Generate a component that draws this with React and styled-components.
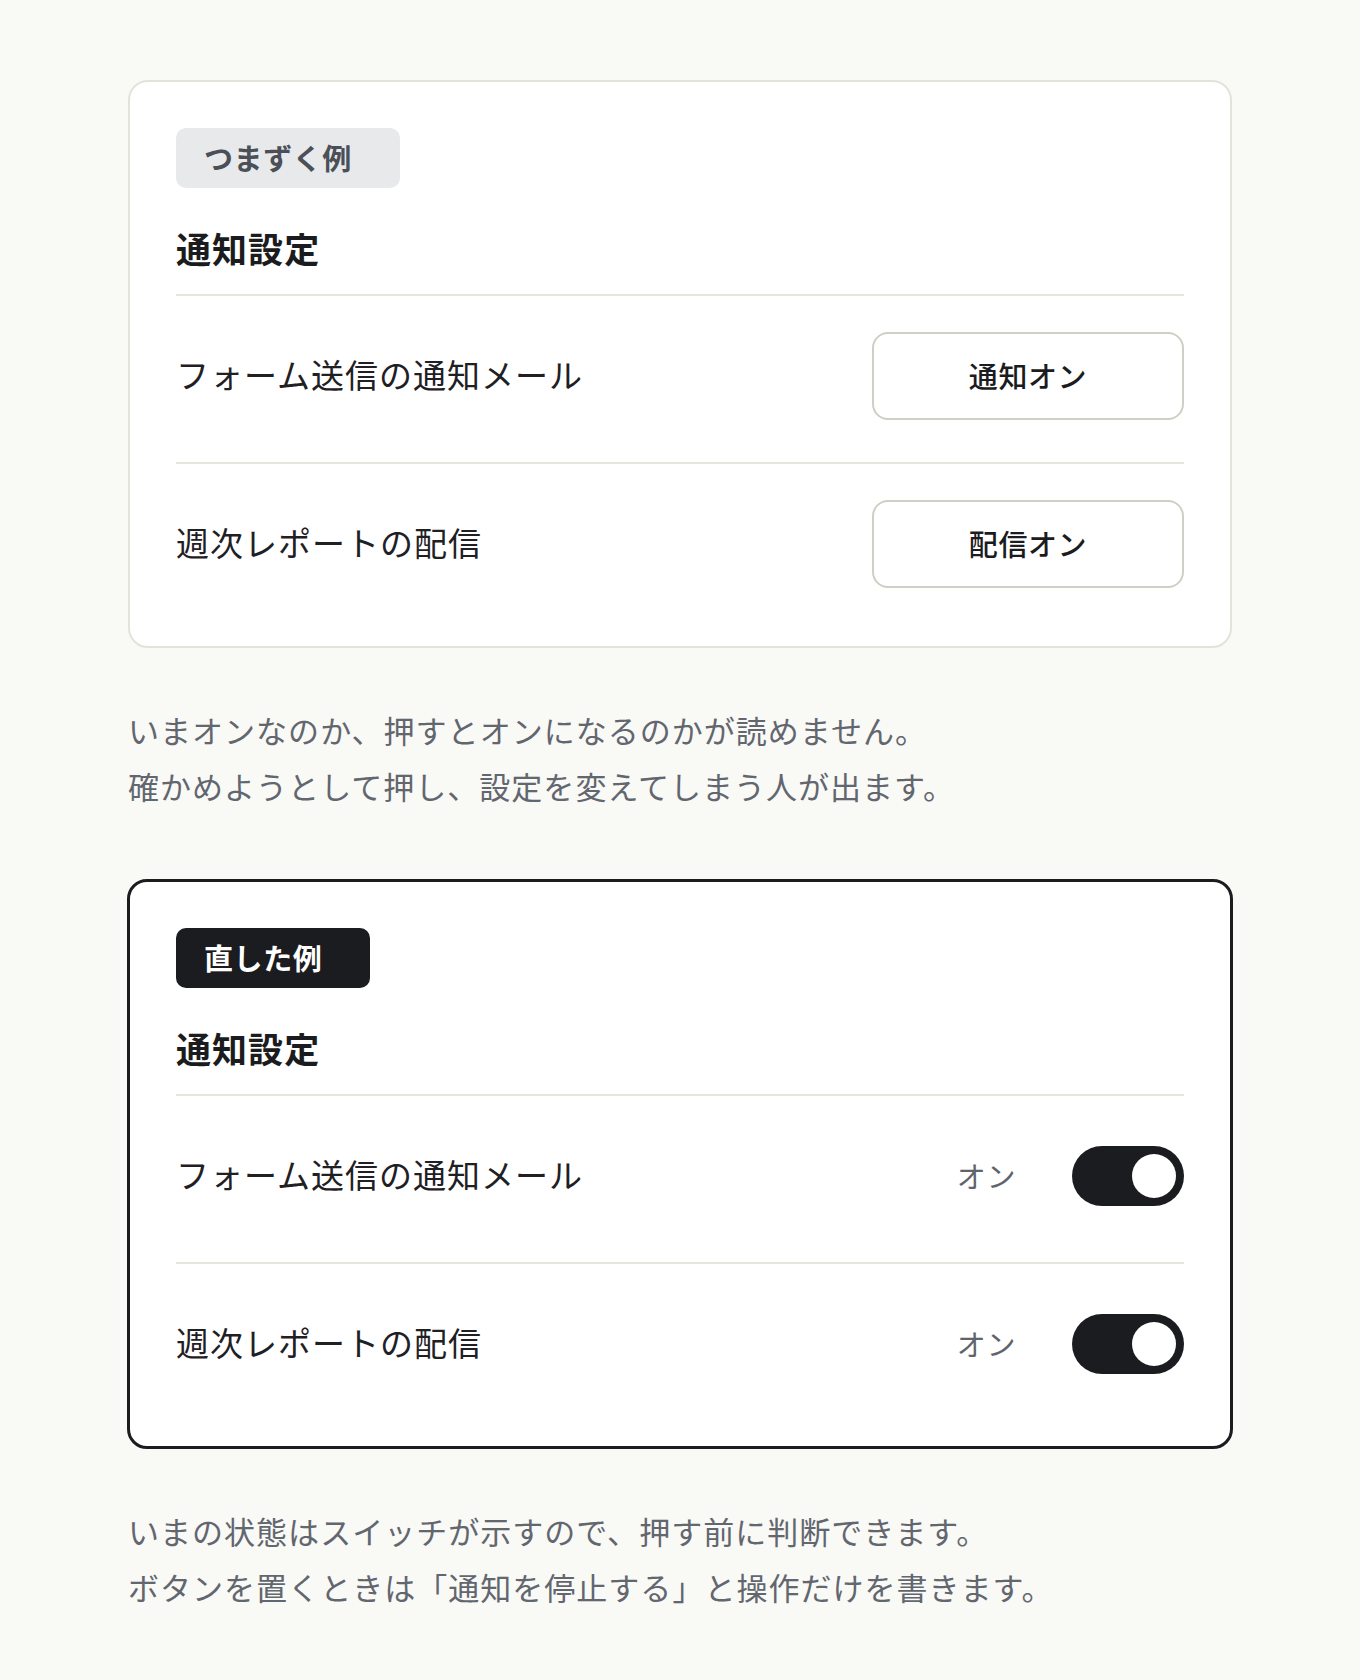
import React from 'react'
import styled, { createGlobalStyle } from "styled-components"

const ink = "#1b1c20";
const line = "#e6e6df";

const GlobalStyle = createGlobalStyle`
  body {
    margin: 0;
    background-color: #f9f9f5;
    font-family: "Noto Sans CJK JP", "Noto Sans", sans-serif;
    color: ${ink};
  }
`;

const settings = [
  { label: "フォーム送信の通知メール", button: "通知オン" },
  { label: "週次レポートの配信", button: "配信オン" },
];

function SettingsCard({ fixed }) {
  return (
    <Card $fixed={fixed}>
      <Badge $fixed={fixed}>{fixed ? "直した例" : "つまずく例"}</Badge>
      <Title>通知設定</Title>
      {settings.map((s) => (
        <Row key={s.label}>
          <Label>{s.label}</Label>
          {fixed ? (
            <SwitchGroup>
              <State>オン</State>
              <Switch role="switch" aria-checked="true">
                <Knob />
              </Switch>
            </SwitchGroup>
          ) : (
            <OutlineButton type="button">{s.button}</OutlineButton>
          )}
        </Row>
      ))}
    </Card>
  )
}

function App() {
  return (
    <>
      <GlobalStyle />
      <Page>
        <Section>
          <SettingsCard />
          <Note>
            いまオンなのか、押すとオンになるのかが読めません。<br />
            確かめようとして押し、設定を変えてしまう人が出ます。
          </Note>
          <Spacer />
          <SettingsCard fixed />
          <Note>
            いまの状態はスイッチが示すので、押す前に判断できます。<br />
            ボタンを置くときは「通知を停止する」と操作だけを書きます。
          </Note>
        </Section>
      </Page>
    </>
  )
}

const Page = styled.main`
  display: flex;
  justify-content: center;
  padding: 80px 0 64px;
`;

const Section = styled.section`
  width: 1104px;
  display: flex;
  flex-direction: column;
`;

const Spacer = styled.div`
  height: 66px;
`;

const Card = styled.div`
  align-self: center;
  width: 1008px;
  padding: 46px;
  background-color: #ffffff;
  border: ${({ $fixed }) => ($fixed ? `3px solid ${ink}` : "2px solid #e3e3dc")};
  border-radius: 20px;
`;

const Badge = styled.div`
  display: inline-flex;
  align-items: center;
  box-sizing: border-box;
  height: 60px;
  padding: 0 48px 3px 28px;
  border-radius: 10px;
  font-size: 29px;
  font-weight: 700;
  letter-spacing: 0.02em;
  background-color: ${({ $fixed }) => ($fixed ? ink : "#e8e9eb")};
  color: ${({ $fixed }) => ($fixed ? "#ffffff" : "#4b4f57")};
`;

const Title = styled.h2`
  margin: 36px 0 0;
  padding-bottom: 22px;
  border-bottom: 2px solid ${line};
  font-size: 35px;
  font-weight: 700;
  line-height: 48px;
  letter-spacing: 0.03em;
`;

const Row = styled.div`
  display: flex;
  align-items: center;
  justify-content: space-between;
  min-height: 88px;
  padding: 36px 0 42px;
  border-bottom: 2px solid ${line};

  &:last-child {
    padding-bottom: 12px;
    border-bottom: none;
  }
`;

const Label = styled.span`
  padding-bottom: 4px;
  font-size: 33px;
  letter-spacing: 0.03em;
  color: #1f2024;
`;

const OutlineButton = styled.button`
  box-sizing: border-box;
  width: 312px;
  height: 88px;
  padding-bottom: 3px;
  background-color: #ffffff;
  border: 2px solid #cfcfc6;
  border-radius: 16px;
  font-family: inherit;
  font-size: 29px;
  font-weight: 500;
  letter-spacing: 0.02em;
  color: ${ink};
  cursor: pointer;
`;

const SwitchGroup = styled.div`
  display: flex;
  align-items: center;
  gap: 56px;
`;

const State = styled.span`
  padding-bottom: 3px;
  font-size: 29px;
  letter-spacing: 0.02em;
  color: #5f636b;
`;

const Switch = styled.div`
  display: flex;
  align-items: center;
  justify-content: flex-end;
  box-sizing: border-box;
  width: 112px;
  height: 60px;
  padding: 8px;
  border-radius: 30px;
  background-color: ${ink};
  cursor: pointer;
`;

const Knob = styled.span`
  width: 44px;
  height: 44px;
  border-radius: 50%;
  background-color: #ffffff;
`;

const Note = styled.p`
  margin: 54px 0 0;
  font-size: 31px;
  line-height: 55.5px;
  letter-spacing: 0.033em;
  color: #62666f;
`;

export default App
